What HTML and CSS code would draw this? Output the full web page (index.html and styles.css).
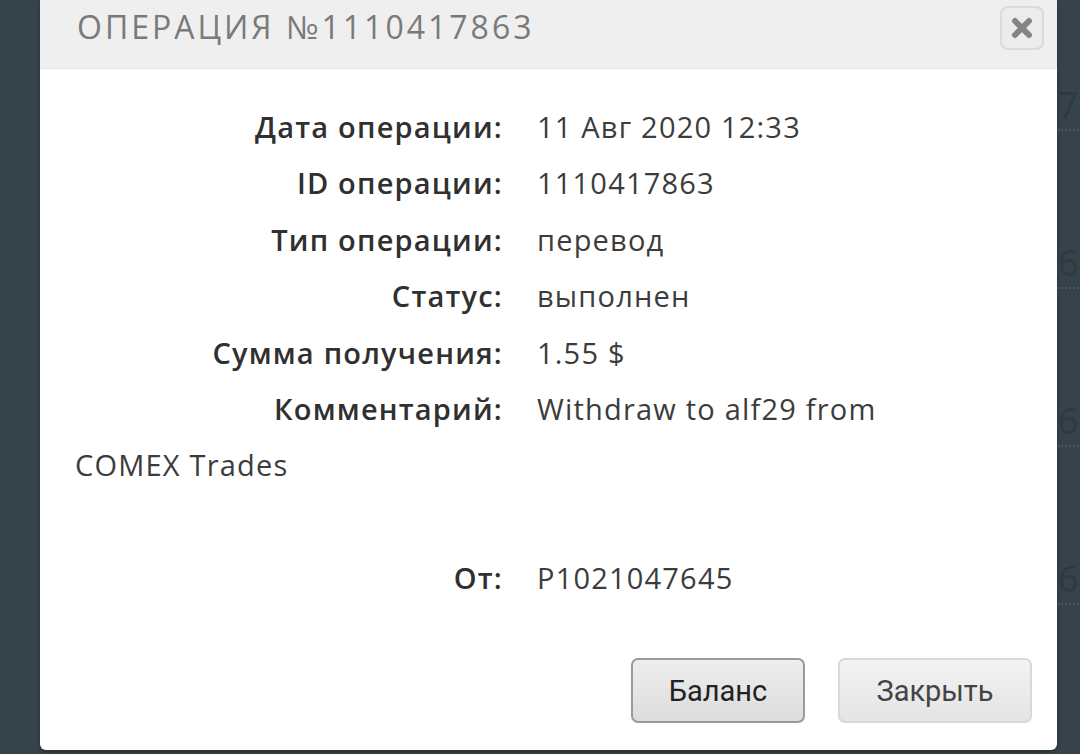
FILE: index.html
```html
<!DOCTYPE html>
<html lang="ru">
<head>
    <meta charset="UTF-8">
    <meta name="viewport" content="width=device-width, initial-scale=1.0">
    <title>Операция №1110417863</title>
    <link rel="stylesheet" href="styles.css">
</head>
<body>
    <div class="backdrop">
        <div class="bg-num" style="top: 80px">70</div>
        <div class="bg-num" style="top: 238px">64</div>
        <div class="bg-num" style="top: 396px">61</div>
        <div class="bg-num" style="top: 554px">63</div>
    </div>
    <div class="modal">
        <div class="modal-header">
            <h2>Операция №1110417863</h2>
            <button type="button" class="btn-x" aria-label="close">
                <svg width="22" height="22" viewBox="0 0 22 22"><path d="M4 4 L18 18 M18 4 L4 18" stroke="#858585" stroke-width="6" stroke-linecap="round"/></svg>
            </button>
        </div>
        <div class="modal-body">
            <div class="row"><span class="label">Дата операции:</span><span class="value">11 Авг 2020 12:33</span></div>
            <div class="row"><span class="label">ID операции:</span><span class="value">1110417863</span></div>
            <div class="row"><span class="label">Тип операции:</span><span class="value">перевод</span></div>
            <div class="row"><span class="label">Статус:</span><span class="value">выполнен</span></div>
            <div class="row"><span class="label">Сумма получения:</span><span class="value">1.55 $</span></div>
            <div class="row comment"><span class="label">Комментарий:</span><span class="value">Withdraw to alf29 from COMEX Trades</span></div>
            <div class="row"><span class="label">От:</span><span class="value">P1021047645</span></div>
        </div>
        <div class="modal-footer">
            <button type="button" class="btn btn-focus">Баланс</button>
            <button type="button" class="btn">Закрыть</button>
        </div>
    </div>
</body>
</html>
```

FILE: styles.css
```css
body {
    margin: 0;
    background: #36434b;
    font-family: "Open Sans", "Noto Sans", sans-serif;
    height: 754px;
    overflow: hidden;
}
.backdrop {
    position: absolute;
    top: 0;
    right: 0;
    width: 22px;
    height: 754px;
    overflow: hidden;
}
.bg-num {
    position: absolute;
    left: 0;
    font-size: 36px;
    color: #2e3a41;
    border-bottom: 2px dotted #4a565e;
}
.modal {
    position: relative;
    margin-left: 40px;
    width: 1017px;
    background: white;
    border-radius: 0 0 6px 6px;
    box-shadow: 0 2px 4px rgba(0, 0, 0, 0.3);
}
.modal-header {
    background: #efefef;
    height: 68px;
    display: flex;
    align-items: center;
    justify-content: space-between;
    padding: 0 13px 0 37px;
    border-bottom: 1px solid #e6e6e6;
}
.modal-header h2 {
    margin: 0;
    margin-top: -15px;
    font-size: 32px;
    font-weight: 400;
    letter-spacing: 3px;
    text-transform: uppercase;
    color: #7a7a7a;
}
.btn-x {
    width: 44px;
    height: 44px;
    margin-top: -12px;
    border: 2px solid #dadada;
    border-radius: 8px;
    background: #ececec;
    display: flex;
    align-items: center;
    justify-content: center;
    padding: 0;
}
.modal-body {
    padding: 30px 110px 0 35px;
    color: #333;
    font-size: 29px;
    line-height: 56.4px;
    letter-spacing: 1.2px;
}
.label {
    float: left;
    width: 428px;
    text-align: right;
    font-weight: 600;
    margin-right: 34px;
    color: #303030;
}
.value {
    color: #3c3c3c;
}
.row::after {
    content: "";
    display: block;
    clear: both;
}
.comment {
    margin-bottom: 56px;
}
.modal-footer {
    display: flex;
    justify-content: flex-end;
    gap: 33px;
    padding: 52px 25px 27px 0;
}
.btn {
    font-family: Roboto, sans-serif;
    font-size: 29px;
    color: #444;
    height: 65px;
    width: 194px;
    border: 2px solid #d8d8d8;
    border-radius: 7px;
    background: linear-gradient(to bottom, #f3f3f3, #e4e4e4);
}
.btn-focus {
    width: 174px;
    color: #222;
    border-color: #9a9a9a;
    background: linear-gradient(to bottom, #eeeeee, #dcdcdc);
}
```
